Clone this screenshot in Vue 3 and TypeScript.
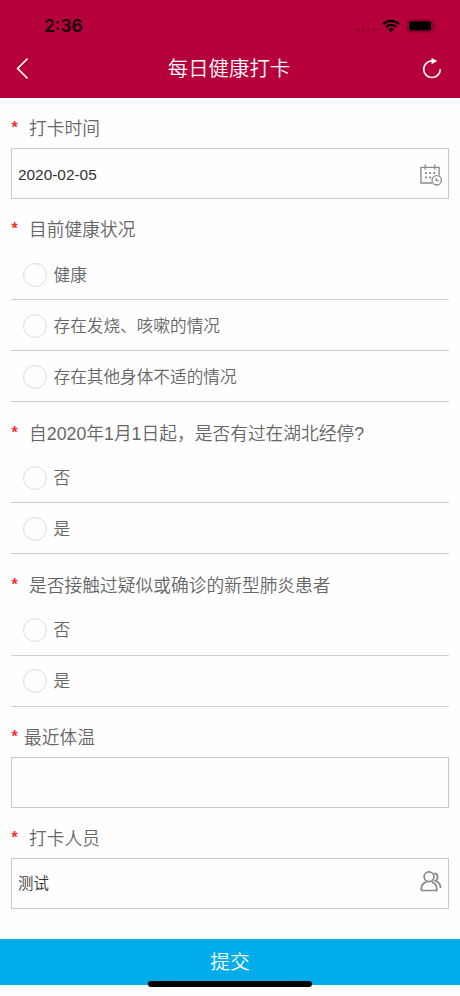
<script setup lang="ts">
import { ref } from 'vue'

interface Field {
  id: string
  label: string
  kind: 'date' | 'radio' | 'text' | 'person'
  value?: string
  options?: string[]
}

const fields: Field[] = [
  { id: 'time', label: '打卡时间', kind: 'date', value: '2020-02-05' },
  { id: 'health', label: '目前健康状况', kind: 'radio', options: ['健康', '存在发烧、咳嗽的情况', '存在其他身体不适的情况'] },
  { id: 'hubei', label: '自2020年1月1日起，是否有过在湖北经停?', kind: 'radio', options: ['否', '是'] },
  { id: 'contact', label: '是否接触过疑似或确诊的新型肺炎患者', kind: 'radio', options: ['否', '是'] },
  { id: 'temperature', label: '最近体温', kind: 'text', value: '' },
  { id: 'person', label: '打卡人员', kind: 'person', value: '测试' },
]

const selected = ref<Record<string, string>>({})

function choose(id: string, option: string): void {
  selected.value[id] = option
}
</script>

<template>
  <div class="screen">
    <header class="header">
      <div class="status">
        <span class="clock">2:36</span>
        <div class="signals">
          <svg class="dots" width="20" height="4" viewBox="0 0 20 4">
            <circle cx="2" cy="2" r="1.5" /><circle cx="7.3" cy="2" r="1.5" />
            <circle cx="12.6" cy="2" r="1.5" /><circle cx="17.9" cy="2" r="1.5" />
          </svg>
          <svg class="wifi" width="18" height="14" viewBox="0 0 18 14">
            <path d="M9 13.2 6.2 10.3a4 4 0 0 1 5.6 0Z" />
            <path class="arc" d="M1.1 5.1a11.2 11.2 0 0 1 15.8 0M3.9 8a7.3 7.3 0 0 1 10.2 0" />
          </svg>
          <svg class="battery" width="29" height="14" viewBox="0 0 29 14">
            <rect class="case" x=".6" y=".9" width="25" height="12" rx="3.2" />
            <rect x="2" y="2.3" width="22.2" height="9.2" rx="2" />
            <path class="tip" d="M27 4.8c2 .8 2 3.5 0 4.3Z" />
          </svg>
        </div>
      </div>
      <div class="navbar">
        <button class="nav-btn" aria-label="返回">
          <svg width="14" height="22" viewBox="0 0 14 22"><path d="M12.5 .6 2.6 10.5 12.5 20.4" /></svg>
        </button>
        <h1>每日健康打卡</h1>
        <button class="nav-btn" aria-label="刷新">
          <svg width="20" height="22" viewBox="0 0 20 22">
            <path d="M10.9 2.9H10a8.3 8.3 0 1 0 8.3 8.3" />
            <path class="arrow" d="M9.5 0 15.3 3 9.5 6.2Z" />
          </svg>
        </button>
      </div>
    </header>

    <main class="form">
      <section v-for="field in fields" :key="field.id" class="field" :class="field.id">
        <div class="label"><span class="star">*</span><span>{{ field.label }}</span></div>
        <template v-if="field.kind === 'radio'">
          <div v-for="option in field.options" :key="option" class="option" @click="choose(field.id, option)">
            <span class="radio" :class="{ on: selected[field.id] === option }"></span>
            <span class="option-text">{{ option }}</span>
          </div>
        </template>
        <div v-else class="input">
          <span class="value">{{ field.value }}</span>
          <svg v-if="field.kind === 'date'" class="icon" width="24" height="24" viewBox="0 0 24 24">
            <path d="M13 20H1.9V4.3h18.2v8.2M6.2 1.6v5.2M15.8 1.6v5.2" />
            <path class="marks" d="M6 10.1h2M10.1 10.1h2M14.2 10.1h2M6 14.3h2M10.1 14.3h2" />
            <circle cx="17.7" cy="17.3" r="4.7" />
            <path d="M17.3 14.9v2.8h2.3" />
          </svg>
          <svg v-if="field.kind === 'person'" class="icon people" width="24" height="24" viewBox="0 0 24 24">
            <circle cx="10" cy="6.8" r="4.9" />
            <path d="M2.2 20.5v-1.2c0-4.2 2.4-6.5 5.3-7.4M12.7 11.9c3 .9 5.1 3.3 5.1 7.4v1.2H2.2" />
            <path d="M15.1 3.3c4.5.1 4.4 6.1 1.3 7.5 3.4 1.2 5.1 4 5.1 7.2" />
          </svg>
        </div>
      </section>
    </main>

    <button class="submit">提交</button>
    <div class="home-bar"></div>
  </div>
</template>

<style>
body {
  margin: 0;
  background: #fff;
}
</style>

<style scoped>
.screen {
  position: relative;
  display: flex;
  flex-direction: column;
  width: 460px;
  height: 996px;
  overflow: hidden;
  background: #fefefe;
  color: #666;
  font-family: "Liberation Sans", "Noto Sans CJK SC", sans-serif;
}
button {
  border: 0;
  padding: 0;
  background: none;
  font-family: inherit;
}
.header {
  display: flex;
  flex-direction: column;
  height: 98px;
  flex: none;
  background: #b5003c;
}
.status {
  display: flex;
  align-items: center;
  justify-content: space-between;
  height: 50px;
  padding: 2px 24px 0 44px;
  box-sizing: border-box;
}
.clock {
  font: 600 17.4px/24px Inter, sans-serif;
  color: #14000a;
}
.signals {
  display: flex;
  align-items: center;
}
.dots {
  margin: 8px 6px 0 0;
  fill: #8a0030;
}
.wifi {
  margin-right: 7px;
}
.wifi .arc {
  fill: none;
  stroke: #000;
  stroke-width: 2.3;
}
.battery .case {
  fill: none;
  stroke: #7b0029;
}
.battery .tip {
  fill: #7b0029;
}
.navbar {
  display: flex;
  align-items: center;
  justify-content: space-between;
  height: 37px;
  padding: 0 18px 0 15px;
}
.navbar h1 {
  margin: 0 0 0 7px;
  color: #fff;
  font-size: 20.4px;
  font-weight: 350;
  line-height: 30px;
}
.nav-btn {
  display: flex;
}
.nav-btn path {
  fill: none;
  stroke: #fff;
  stroke-width: 1.6;
}
.nav-btn .arrow {
  fill: #fff;
  stroke: none;
}
.form {
  flex: none;
  height: 841px;
  padding: 0 11px;
  box-sizing: border-box;
}
.label {
  display: flex;
  align-items: center;
  height: 50px;
  padding: 12px 0 0 .6px;
  box-sizing: border-box;
  font-size: 17.74px;
  font-weight: 350;
  line-height: 26px;
  white-space: nowrap;
}
.contact .label,
.temperature .label {
  height: 50.5px;
}
.temperature .label,
.contact .label,
.hubei .label {
  padding-top: 13px;
}
.star {
  width: 17.5px;
  padding-bottom: 2px;
  box-sizing: border-box;
  color: #f5302f;
  font-size: 16px;
  font-weight: 700;
}
.temperature .star {
  width: 12.5px;
}
.input {
  display: flex;
  align-items: center;
  justify-content: space-between;
  height: 51px;
  padding: 2px 5px 0 6px;
  box-sizing: border-box;
  border: 1px solid #c9c9c9;
  color: #333;
  font-size: 15.4px;
  font-weight: 350;
}
.person .value {
  padding-bottom: 5px;
}
.icon {
  fill: none;
  stroke: #888;
  stroke-width: 1.3;
}
.icon .marks {
  stroke-width: 1.7;
}
.people {
  stroke-width: 1.7;
  margin-top: -6px;
}
.option {
  display: flex;
  align-items: center;
  gap: 7px;
  height: 51px;
  padding: 1px 0 0 11.5px;
  box-sizing: border-box;
  border-bottom: 1px solid #cfcfcf;
  font-size: 16.65px;
  font-weight: 350;
}
.option-text {
  padding-bottom: 2px;
}
.radio {
  width: 24px;
  height: 24px;
  box-sizing: border-box;
  border: 1px solid #ddd;
  border-radius: 50%;
}
.radio.on {
  border: 7px solid #00adea;
}
.submit {
  height: 45.5px;
  flex: none;
  padding-bottom: 2px;
  background: #00adea;
  color: #fff;
  font-size: 19.8px;
  font-weight: 350;
}
.home-bar {
  position: absolute;
  left: 148px;
  top: 981px;
  width: 164px;
  height: 6px;
  border-radius: 3px;
  background: #000;
}
</style>
